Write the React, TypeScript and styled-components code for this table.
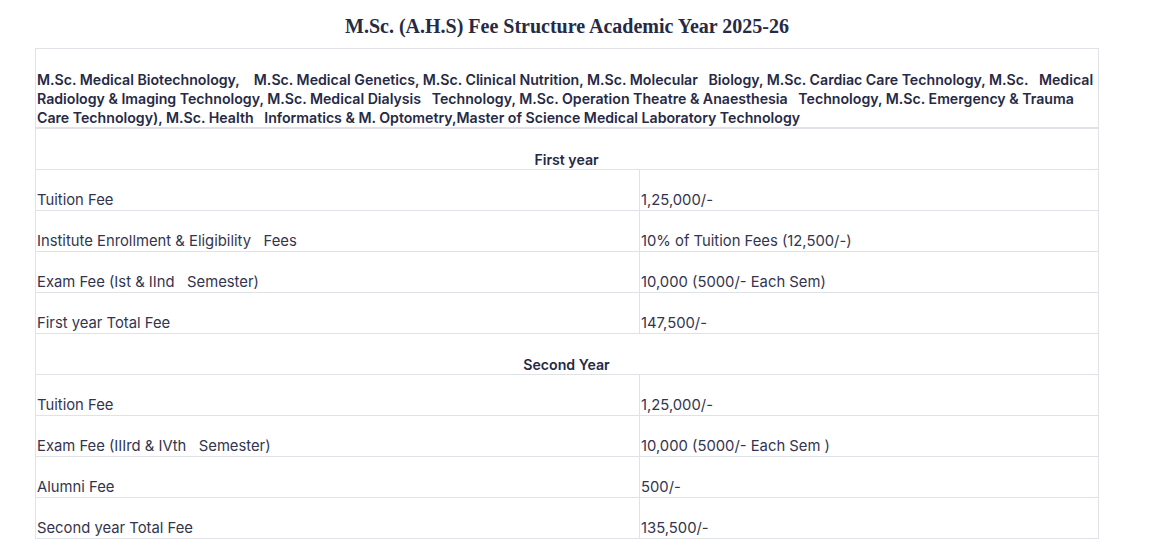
import styled, { createGlobalStyle } from "styled-components"

const GlobalStyle = createGlobalStyle`
    body{
        margin: 0;
        background: #fff;
        font-family: Inter, Roboto, "Liberation Sans", sans-serif;
    }
`

const Page = styled.div`
    padding: 0 65px 0 35px;
    display: flex;
    flex-direction: column;
    align-items: center;
`

const Title = styled.h2`
    margin: 0;
    height: 43px;
    padding-top: 5px;
    display: flex;
    align-items: center;
    font-family: "Liberation Serif", "DejaVu Serif", serif;
    font-size: 20px;
    font-weight: 700;
    color: #262a45;
`

const Table = styled.table`
    width: 1064px;
    border-collapse: collapse;
    color: #33354f;
    font-size: 14.8px;
`

const Cell = styled.td<{ $bold?: boolean; $center?: boolean; $width?: string }>`
    border: 1px solid #dfe2e6;
    height: 40px;
    padding: 0 2px 0 1px;
    vertical-align: bottom;
    line-height: 19px;
    font-weight: ${p => (p.$bold ? 600 : 400)};
    font-size: ${p => (p.$bold ? "14.15px" : "inherit")};
    color: ${p => (p.$bold ? "#262a45" : "inherit")};
    text-align: ${p => (p.$center ? "center" : "left")};
    width: ${p => p.$width || "auto"};
`

const HeadCell = styled(Cell)`
    height: 78px;
    border-bottom: 2px solid #dfe2e6;
    white-space: nowrap;
`

const Gap = styled.span`
    white-space: pre;
`

interface Row{
    label: string
    value: string
}

const firstYear: Row[] = [
    { label: "Tuition Fee", value: "1,25,000/-" },
    { label: "Institute Enrollment & Eligibility   Fees", value: "10% of Tuition Fees (12,500/-)" },
    { label: "Exam Fee (Ist & IInd   Semester)", value: "10,000 (5000/- Each Sem)" },
    { label: "First year Total Fee", value: "147,500/-" },
]

const secondYear: Row[] = [
    { label: "Tuition Fee", value: "1,25,000/-" },
    { label: "Exam Fee (IIIrd & IVth   Semester)", value: "10,000 (5000/- Each Sem )" },
    { label: "Alumni Fee", value: "500/-" },
    { label: "Second year Total Fee", value: "135,500/-" },
]

const Section = ({ name, rows }: { name: string; rows: Row[] }) => (
    <>
        <tr>
            <Cell colSpan={2} $bold $center>{name}</Cell>
        </tr>
        {rows.map(r => (
            <tr key={r.label}>
                <Cell $width="600px"><Gap>{r.label}</Gap></Cell>
                <Cell><Gap>{r.value}</Gap></Cell>
            </tr>
        ))}
    </>
)

const App = () => {
    return(
        <Page>
            <GlobalStyle />
            <Title>M.Sc. (A.H.S) Fee Structure Academic Year 2025-26</Title>
            <Table>
                <tbody>
                    <tr>
                        <HeadCell colSpan={2} $bold>
                            <Gap>M.Sc. Medical Biotechnology,    M.Sc. Medical Genetics, M.Sc. Clinical Nutrition, M.Sc. Molecular   Biology, M.Sc. Cardiac Care Technology, M.Sc.   Medical</Gap>
                            <br />
                            <Gap>Radiology & Imaging Technology, M.Sc. Medical Dialysis   Technology, M.Sc. Operation Theatre & Anaesthesia   Technology, M.Sc. Emergency & Trauma</Gap>
                            <br />
                            <Gap>Care Technology), M.Sc. Health   Informatics & M. Optometry,Master of Science Medical Laboratory Technology</Gap>
                        </HeadCell>
                    </tr>
                    <Section name="First year" rows={firstYear} />
                    <Section name="Second Year" rows={secondYear} />
                </tbody>
            </Table>
        </Page>
    )
}

export default App
